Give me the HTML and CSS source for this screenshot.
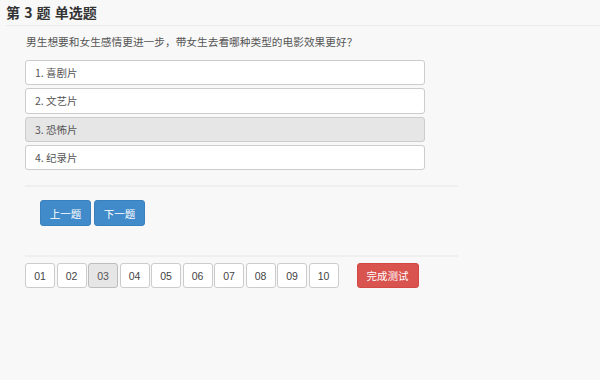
FILE: index.html
```html
<!DOCTYPE html>
<html lang="zh">
<head>
<meta charset="utf-8">
<title>第 3 题 单选题</title>
<link rel="stylesheet" href="styles.css">
</head>
<body>
<div class="page">
  <h1 class="title">第 3 题 单选题</h1>
  <div class="content">
    <p class="question">男生想要和女生感情更进一步，带女生去看哪种类型的电影效果更好？</p>
    <ul class="options">
      <li class="option">1. 喜剧片</li>
      <li class="option">2. 文艺片</li>
      <li class="option selected">3. 恐怖片</li>
      <li class="option">4. 纪录片</li>
    </ul>
    <div class="rule"></div>
    <div class="nav">
      <button class="btn btn-blue">上一题</button>
      <button class="btn btn-blue">下一题</button>
    </div>
    <div class="rule rule2"></div>
    <div class="pager">
      <div class="pages">
        <button class="pg">01</button>
        <button class="pg">02</button>
        <button class="pg active">03</button>
        <button class="pg">04</button>
        <button class="pg">05</button>
        <button class="pg">06</button>
        <button class="pg">07</button>
        <button class="pg">08</button>
        <button class="pg">09</button>
        <button class="pg">10</button>
      </div>
      <button class="btn btn-red">完成测试</button>
    </div>
  </div>
</div>
</body>
</html>
```

FILE: styles.css
```css
html, body {
  margin: 0;
  padding: 0;
  background: #f8f8f8;
}
body {
  font-family: "Noto Sans CJK SC", "Noto Sans", sans-serif;
  color: #555;
  width: 600px;
  height: 380px;
  overflow: hidden;
}
.title {
  margin: 0 0 0 6px;
  height: 25px;
  line-height: 25px;
  font-size: 14px;
  font-weight: bold;
  color: #333;
  border-bottom: 1px solid #ebebeb;
  word-spacing: 1px;
}
.content {
  padding-left: 25px;
}
.question {
  margin: 8px 0 0 1px;
  font-size: 10.7px;
  line-height: 16px;
  color: #555;
}
.options {
  list-style: none;
  margin: 10px 0 0 0;
  padding: 0;
  width: 400px;
  display: flex;
  flex-direction: column;
  gap: 3px;
}
.option {
  box-sizing: border-box;
  height: 25.3px;
  line-height: 23px;
  padding-left: 9px;
  font-size: 10.5px;
  color: #555;
  background: #fff;
  border: 1px solid #ccc;
  border-radius: 3px;
}
.option.selected {
  background: #e6e6e6;
  border-color: #ccc;
}
.rule {
  width: 433px;
  height: 2px;
  background: #efefef;
  margin-top: 15px;
}
.nav {
  display: flex;
  gap: 3px;
  margin: 13px 0 0 15px;
}
.btn {
  box-sizing: border-box;
  height: 26px;
  padding: 0;
  font-family: "Noto Sans CJK SC", sans-serif;
  font-size: 10.5px;
  color: #fff;
  border-radius: 3px;
  cursor: pointer;
}
.btn-blue {
  width: 51px;
  background: #428bca;
  border: 1px solid #3a80bd;
}
.rule2 {
  margin-top: 29px;
}
.pager {
  display: flex;
  align-items: center;
  margin-top: 6px;
}
.pages {
  display: flex;
  gap: 1.5px;
}
.pg {
  box-sizing: border-box;
  width: 30px;
  height: 25px;
  padding: 0;
  background: #fff;
  border: 1px solid #ccc;
  border-radius: 3px;
  font-family: "Liberation Sans", "Noto Sans", sans-serif;
  font-size: 10.5px;
  color: #444;
}
.pg.active {
  background: #e6e6e6;
  border-color: #bdbdbd;
  color: #555;
}
.btn-red {
  width: 62px;
  height: 25px;
  margin-left: 18px;
  background: #d9534f;
  border: 1px solid #d24844;
}
```
